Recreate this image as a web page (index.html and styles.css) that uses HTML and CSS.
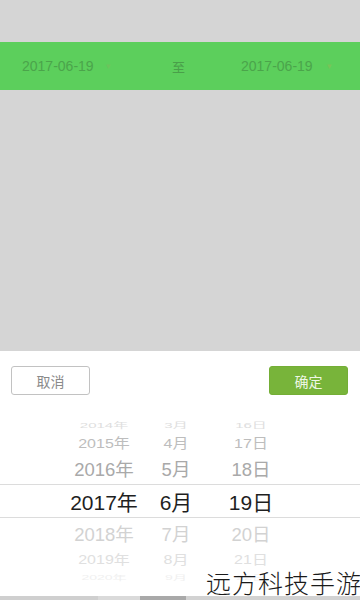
FILE: index.html
```html
<!DOCTYPE html>
<html lang="zh">
<head>
<meta charset="utf-8">
<title>日期选择</title>
<link rel="stylesheet" href="styles.css">
</head>
<body>
<div class="page">
  <div class="top-space"></div>
  <div class="range-bar">
    <div class="date-cell left"><span class="date">2017-06-19</span><span class="caret">▾</span></div>
    <div class="sep">至</div>
    <div class="date-cell right"><span class="date">2017-06-19</span><span class="caret">▾</span></div>
  </div>
  <div class="mask"></div>
  <div class="sheet">
    <div class="actions">
      <button class="btn btn-cancel">取消</button>
      <button class="btn btn-ok">确定</button>
    </div>
    <div class="picker">
      <div class="row r-far-top"><span class="c-y">2014年</span><span class="c-m">3月</span><span class="c-d">16日</span></div>
      <div class="row r-near2-top"><span class="c-y">2015年</span><span class="c-m">4月</span><span class="c-d">17日</span></div>
      <div class="row r-near1-top"><span class="c-y">2016年</span><span class="c-m">5月</span><span class="c-d">18日</span></div>
      <div class="row r-sel"><span class="c-y">2017年</span><span class="c-m">6月</span><span class="c-d">19日</span></div>
      <div class="row r-near1-bot"><span class="c-y">2018年</span><span class="c-m">7月</span><span class="c-d">20日</span></div>
      <div class="row r-near2-bot"><span class="c-y">2019年</span><span class="c-m">8月</span><span class="c-d">21日</span></div>
      <div class="row r-far-bot"><span class="c-y">2020年</span><span class="c-m">9月</span><span class="c-d">22日</span></div>
    </div>
  </div>
  <div class="bottom-strip">
    <span class="seg s1"></span><span class="seg s2"></span><span class="seg s3"></span><span class="seg s4"></span>
  </div>
  <div class="watermark">远方科技手游</div>
</div>
</body>
</html>
```
FILE: styles.css
```css
* { box-sizing: border-box; }
html, body { margin: 0; padding: 0; }
body {
  width: 360px;
  height: 600px;
  overflow: hidden;
  background: #d5d5d5;
  font-family: "Liberation Sans", "Noto Sans CJK SC", sans-serif;
}
.page {
  position: relative;
  width: 360px;
  height: 600px;
  display: flex;
  flex-direction: column;
}
.top-space { height: 42px; background: #d5d5d5; }
.range-bar {
  height: 48px;
  background: #5ccf5c;
  display: flex;
  align-items: center;
  font-size: 14px;
  color: #4ba44b;
}
.date-cell { display: flex; align-items: center; }
.date-cell.left { padding-left: 22px; width: 172px; }
.date-cell.right { padding-left: 63px; }
.caret { font-size: 9px; color: #6cc45c; margin-left: 12px; }
.date-cell.right .caret { margin-left: 14px; color: #78c458; }
.sep { width: 6px; color: #4a9f4a; font-family: "Noto Sans CJK SC", sans-serif; font-size: 13px; }
.mask { height: 261px; background: #d5d5d5; }
.sheet {
  height: 245px;
  background: #fff;
  display: flex;
  flex-direction: column;
}
.actions {
  display: flex;
  justify-content: space-between;
  padding: 15px 12px 0 11px;
}
.btn {
  width: 79px;
  height: 29px;
  border-radius: 3px;
  font-family: "Noto Sans CJK SC", sans-serif;
  font-size: 14px;
  padding: 0;
}
.btn-cancel {
  background: #fff;
  border: 1px solid #c2c2c2;
  color: #8a8a8a;
}
.btn-ok {
  background: #78b43a;
  border: 1px solid #74ae36;
  color: #eef7e4;
}
.picker {
  margin-top: 21px;
  display: flex;
  flex-direction: column;
  overflow: hidden;
}
.row {
  display: flex;
  align-items: center;
  padding-left: 62px;
  white-space: nowrap;
}
.c-y { width: 84px; text-align: center; }
.c-m { width: 44px; margin-left: 8px; text-align: center; }
.c-d { width: 54px; margin-left: 26px; text-align: center; }
.r-far-top { height: 16px; font-size: 15px; color: #dedede; transform: scaleY(0.5); transform-origin: center 60%; }
.r-near2-top { height: 20px; font-size: 16px; color: #bdbdbd; transform: scaleY(0.85); }
.r-near1-top { height: 32px; font-size: 18.5px; color: #a9a9a9; }
.r-sel {
  height: 34px;
  font-size: 21px;
  color: #1f1f1f;
  border-top: 1px solid #dcdcdc;
  border-bottom: 1px solid #dcdcdc;
}
.r-near1-bot { height: 30px; font-size: 18.5px; color: #d2d2d2; }
.r-near2-bot { height: 20px; font-size: 16px; color: #e0e0e0; transform: scaleY(0.8); }
.r-far-bot { height: 18px; font-size: 14px; color: #f0f0f0; transform: scaleY(0.5); }
.bottom-strip { height: 4px; display: flex; }
.seg { height: 4px; }
.s1 { width: 98px; background: #cfcfcf; }
.s2 { width: 42px; background: #dadada; }
.s3 { width: 46px; background: #a9a9a9; }
.s4 { flex: 1; background: #d2d2d2; }
.watermark {
  position: absolute;
  left: 206px;
  top: 564px;
  font-family: "Noto Sans CJK SC", sans-serif;
  font-weight: 300;
  font-size: 25px;
  letter-spacing: 1px;
  color: #1a1a1a;
  white-space: nowrap;
  text-shadow: 0 0 2px #fff, 0 0 2px #fff;
}
```
